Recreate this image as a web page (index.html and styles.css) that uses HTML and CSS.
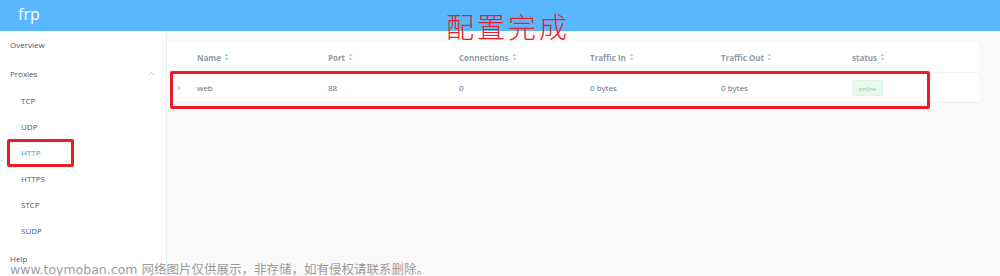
FILE: index.html
```html
<html><head>
<meta charset="UTF-8">
<meta name="viewport" content="width=device-width, initial-scale=1.0">
<title>frp</title>
<link rel="stylesheet" href="styles.css">
</head>
<body>
  <header class="topbar">
    <span class="brand">frp</span>
  </header>

  <div class="layout">
    <aside class="sidebar">
      <div class="menu-item first">Overview</div>
      <div class="menu-item group">
        <span>Proxies</span>
        <svg class="chev" width="7" height="5" viewBox="0 0 7 5"><path d="M0.8 4L3.5 1.3L6.2 4" fill="none" stroke="#c0c4cc" stroke-width="0.9"/></svg>
      </div>
      <div class="menu-item sub">TCP</div>
      <div class="menu-item sub">UDP</div>
      <div class="menu-item sub active">HTTP</div>
      <div class="menu-item sub">HTTPS</div>
      <div class="menu-item sub">STCP</div>
      <div class="menu-item sub">SUDP</div>
      <div class="menu-item help">Help</div>
      <div class="mark mark-http"></div>
    </aside>

    <main class="content">
      <div class="table">
        <div class="row head">
          <div class="cell"></div>
          <div class="cell">Name <svg class="sort on" width="5" height="8" viewBox="0 0 5 8"><path d="M2.5 0.5L4.5 3H0.5Z M2.5 7.5L4.5 5H0.5Z"/></svg></div>
          <div class="cell">Port <svg class="sort" width="5" height="8" viewBox="0 0 5 8"><path d="M2.5 0.5L4.5 3H0.5Z M2.5 7.5L4.5 5H0.5Z"/></svg></div>
          <div class="cell">Connections <svg class="sort" width="5" height="8" viewBox="0 0 5 8"><path d="M2.5 0.5L4.5 3H0.5Z M2.5 7.5L4.5 5H0.5Z"/></svg></div>
          <div class="cell">Traffic In <svg class="sort" width="5" height="8" viewBox="0 0 5 8"><path d="M2.5 0.5L4.5 3H0.5Z M2.5 7.5L4.5 5H0.5Z"/></svg></div>
          <div class="cell">Traffic Out <svg class="sort" width="5" height="8" viewBox="0 0 5 8"><path d="M2.5 0.5L4.5 3H0.5Z M2.5 7.5L4.5 5H0.5Z"/></svg></div>
          <div class="cell">status <svg class="sort" width="5" height="8" viewBox="0 0 5 8"><path d="M2.5 0.5L4.5 3H0.5Z M2.5 7.5L4.5 5H0.5Z"/></svg></div>
        </div>
        <div class="row body">
          <div class="cell expand"><svg width="4" height="6" viewBox="0 0 4 6"><path d="M1 1L3 3L1 5" fill="none" stroke="#97a8be" stroke-width="0.8"/></svg></div>
          <div class="cell">web</div>
          <div class="cell">88</div>
          <div class="cell">0</div>
          <div class="cell">0 bytes</div>
          <div class="cell">0 bytes</div>
          <div class="cell"><span class="tag">online</span></div>
        </div>
      </div>
      <div class="mark mark-row"></div>
    </main>
  </div>

  <div class="note">配置完成</div>
  <div class="watermark">www.toymoban.com 网络图片仅供展示，非存储，如有侵权请联系删除。</div>
</body></html>
```

FILE: styles.css
```css
body {
  margin: 0;
  font-family: "Open Sans", "Liberation Sans", Arial, sans-serif;
  color: #48576a;
  background-color: #f9f9f9;
  height: 276px;
  overflow: hidden;
  position: relative;
}
.topbar {
  height: 31px;
  background-color: #58b7ff;
  display: flex;
  align-items: center;
}
.brand {
  color: #fff;
  font-size: 16px;
  margin-left: 18px;
  margin-top: -3px;
}
.layout {
  display: flex;
  height: 245px;
}
.sidebar {
  width: 166px;
  background-color: #fff;
  border-right: 1px solid #eaeef2;
  position: relative;
  font-size: 8px;
}
.menu-item {
  height: 26px;
  line-height: 26px;
  padding-left: 10px;
  color: #48576a;
}
.menu-item.first {
  height: 28px;
  line-height: 28px;
}
.menu-item.group {
  height: 29px;
  line-height: 30px;
  display: flex;
  justify-content: space-between;
  align-items: center;
  padding-right: 11px;
}
.menu-item.sub {
  padding-left: 21px;
}
.menu-item.active {
  color: #20a0ff;
}
.menu-item.help {
  height: 28px;
  line-height: 30px;
}
.content {
  flex: 1;
  position: relative;
  padding-top: 11px;
}
.table {
  width: 812px;
  background-color: #fff;
  font-size: 8px;
}
.row {
  display: grid;
  grid-template-columns: 30px repeat(5, 131px) 1fr;
  align-items: center;
}
.row.head {
  height: 30px;
  color: #8f9bab;
  font-weight: bold;
}
.row.body {
  height: 29px;
  color: #5e6d82;
  border-top: 1px solid #f2f4f6;
  border-bottom: 1px solid #eceff3;
}
.cell {
  display: flex;
  align-items: center;
  gap: 3px;
}
.expand {
  padding-left: 10px;
}
.sort {
  fill: #c0ccda;
}
.sort.on {
  fill: #8fc8f5;
}
.tag {
  display: inline-block;
  width: 31px;
  height: 16px;
  line-height: 16px;
  text-align: center;
  border-radius: 2px;
  font-size: 6px;
  font-weight: normal;
  color: #7fce8e;
  background-color: #e9f8ec;
  border: 1px solid #def3e2;
  box-sizing: border-box;
}
.mark {
  position: absolute;
  border: 3px solid #ec1c24;
  border-radius: 2px;
  box-sizing: border-box;
}
.mark-http {
  left: 7px;
  top: 108px;
  width: 67px;
  height: 28px;
}
.mark-row {
  left: 3px;
  top: 40px;
  width: 760px;
  height: 38px;
}
.note {
  position: absolute;
  left: 446px;
  top: 6px;
  font-family: "Noto Sans CJK SC", sans-serif;
  font-size: 28px;
  font-weight: 300;
  color: #ec1c24;
  letter-spacing: 3px;
}
.watermark {
  position: absolute;
  left: 10px;
  bottom: 0;
  right: 0;
  height: 12px;
  line-height: 12px;
  font-family: "DejaVu Sans", "Noto Sans CJK SC", sans-serif;
  font-size: 12.5px;
  color: rgba(120, 120, 120, 0.75);
  white-space: nowrap;
}
```
